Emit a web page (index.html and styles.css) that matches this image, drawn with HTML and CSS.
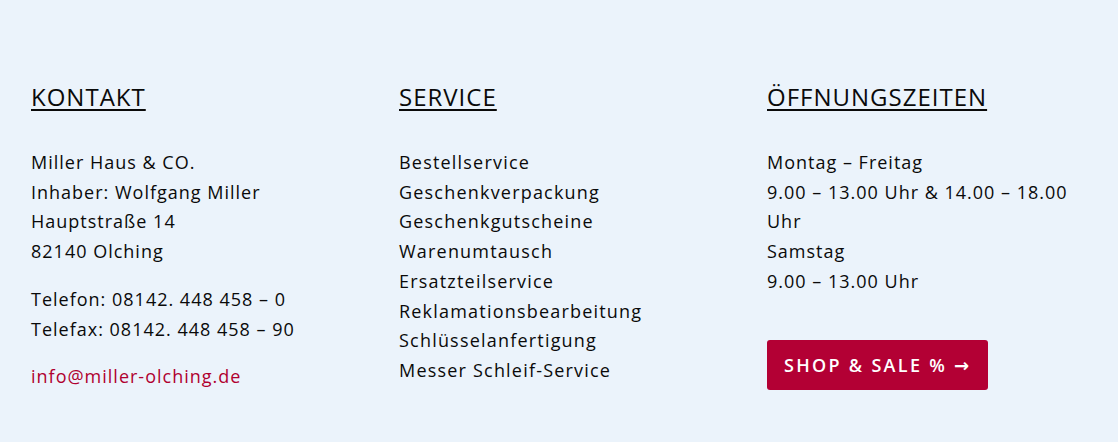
FILE: index.html
```html
<!DOCTYPE html>
<html lang="de">
<head>
    <meta charset="UTF-8">
    <meta name="viewport" content="width=device-width, initial-scale=1.0">
    <title>Miller Haus &amp; CO. – Kontakt</title>
    <link rel="stylesheet" href="styles.css">
</head>
<body>
    <footer class="footer">
        <div class="footer-grid">
            <div class="footer-col">
                <h2>KONTAKT</h2>
                <p>Miller Haus &amp; CO.<br>Inhaber: Wolfgang Miller<br>Hauptstraße 14<br>82140 Olching</p>
                <p>Telefon: 08142. 448 458 – 0<br>Telefax: 08142. 448 458 – 90</p>
                <p><a class="mail" href="#">info@miller-olching.de</a></p>
            </div>
            <div class="footer-col">
                <h2>SERVICE</h2>
                <ul class="service-list">
                    <li>Bestellservice</li>
                    <li>Geschenkverpackung</li>
                    <li>Geschenkgutscheine</li>
                    <li>Warenumtausch</li>
                    <li>Ersatzteilservice</li>
                    <li>Reklamationsbearbeitung</li>
                    <li>Schlüsselanfertigung</li>
                    <li>Messer Schleif-Service</li>
                </ul>
            </div>
            <div class="footer-col">
                <h2>ÖFFNUNGSZEITEN</h2>
                <p>Montag – Freitag<br>9.00 – 13.00 Uhr &amp; 14.00 – 18.00 Uhr<br>Samstag<br>9.00 – 13.00 Uhr</p>
                <a class="shop-button" href="#">SHOP &amp; SALE % &rarr;</a>
            </div>
        </div>
    </footer>
</body>
</html>
```

FILE: styles.css
```css
body {
    margin: 0;
    background-color: #ebf3fb;
    font-family: 'Open Sans', 'DejaVu Sans', sans-serif;
    color: #0a0a0a;
}
.footer {
    padding: 82px 31px 40px;
}
.footer-grid {
    display: grid;
    grid-template-columns: repeat(3, 320px);
    column-gap: 48px;
}
.footer-col h2 {
    margin: 0 0 37px;
    font-size: 24px;
    font-weight: 400;
    line-height: 29px;
    letter-spacing: 1px;
    text-decoration: underline;
    text-decoration-thickness: 2px;
    text-underline-offset: 3px;
}
.footer-col p {
    margin: 0 0 18px;
    font-size: 18px;
    font-weight: 500;
    line-height: 29.7px;
    letter-spacing: 1px;
}
.service-list {
    list-style: none;
    margin: 0;
    padding: 0;
    font-size: 18px;
    font-weight: 500;
    line-height: 29.7px;
    letter-spacing: 1.2px;
}
.mail {
    color: #b0002f;
    text-decoration: none;
}
.shop-button {
    display: inline-block;
    margin-top: 25px;
    padding: 0 17px;
    height: 50px;
    line-height: 50px;
    background-color: #b30034;
    color: #fff;
    border-radius: 3px;
    font-size: 18px;
    font-weight: 600;
    letter-spacing: 2.3px;
    text-decoration: none;
}
```
